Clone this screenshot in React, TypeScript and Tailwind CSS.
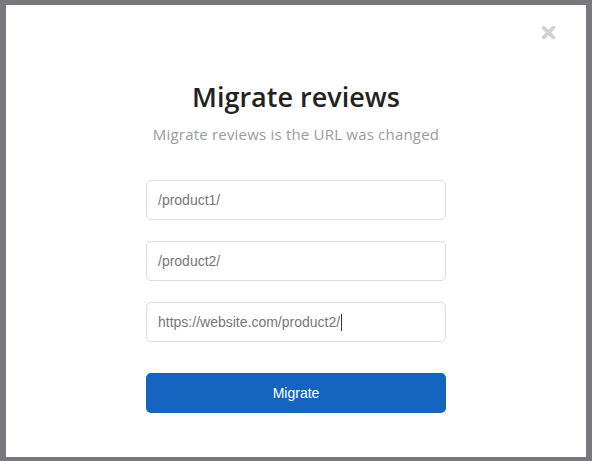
import React from "react";

export default function App() {
  return (
    <div className="w-[592px] h-[461px] bg-[#78787c] pt-[5px] pl-[6px] overflow-hidden">
      <div className="relative w-[580px] h-[452px] bg-white flex flex-col items-center pt-[74px]">
        <button className="absolute right-[30px] top-[20px] w-[15px] h-[15px] text-[#d2d2d6]" aria-label="close">
          <svg viewBox="0 0 16 16" width="15" height="15">
            <path d="M2.8 2.8 L13.2 13.2 M13.2 2.8 L2.8 13.2" stroke="currentColor" strokeWidth="4" strokeLinecap="round" />
          </svg>
        </button>
        <h1 className="text-[27px] leading-[36px] font-semibold text-[#222] font-['Open_Sans',sans-serif]">
          Migrate reviews
        </h1>
        <p className="mt-[9px] text-[15px] leading-[20px] font-medium tracking-[0.2px] text-[#9b9b9b] font-['Open_Sans',sans-serif]">
          Migrate reviews is the URL was changed
        </p>
        <div className="mt-[36px] w-[300px] flex flex-col gap-[21px]">
          <div className="h-[40px] rounded-[5px] border border-[#dcdce8] px-[11px] flex items-center text-[14px] text-[#777] font-['Liberation_Sans',Arial,sans-serif]">
            /product1/
          </div>
          <div className="h-[40px] rounded-[5px] border border-[#dcdce8] px-[11px] flex items-center text-[14px] text-[#777] font-['Liberation_Sans',Arial,sans-serif]">
            /product2/
          </div>
          <div className="h-[40px] rounded-[5px] border border-[#dcdce8] px-[11px] flex items-center text-[14px] text-[#777] font-['Liberation_Sans',Arial,sans-serif]">
            https://website.com/product2/<span className="inline-block w-[1px] h-[17px] bg-[#333] ml-[1px]" />
          </div>
          <button className="mt-[10px] h-[40px] rounded-[5px] bg-[#1565c0] text-white text-[14px] font-['Liberation_Sans',Arial,sans-serif]">
            Migrate
          </button>
        </div>
      </div>
    </div>
  );
}
